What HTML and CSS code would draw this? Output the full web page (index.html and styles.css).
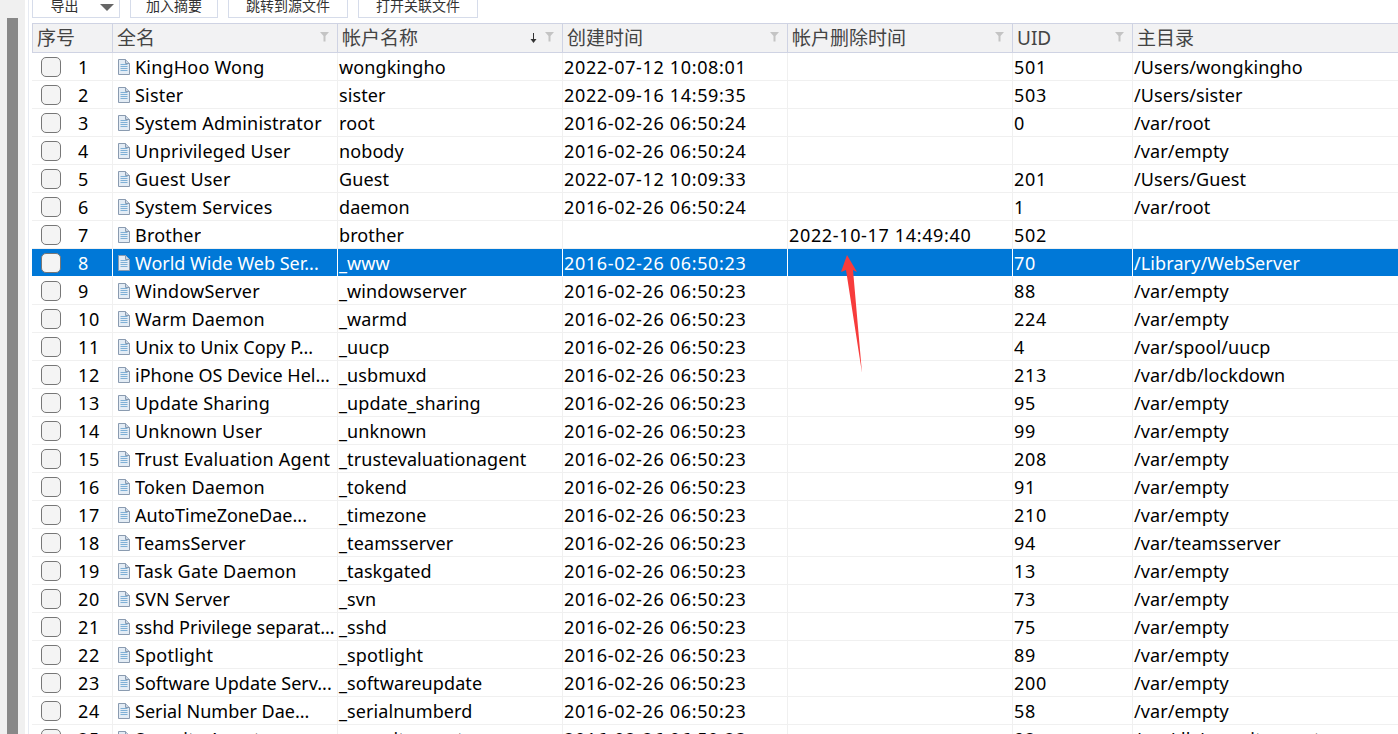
FILE: index.html
```html
<!DOCTYPE html>
<html lang="zh-CN">
<head>
  <meta charset="UTF-8">
  <title>用户账户</title>
  <link rel="stylesheet" href="styles.css">
</head>
<body>
  <div class="side"><div class="side-thumb"></div></div>
  <div class="main">
    <div class="toolbar">
      <button class="btn btn-export"><span class="btn-label">导出</span><span class="caret"></span></button>
      <button class="btn btn-add"><span class="btn-label">加入摘要</span></button>
      <button class="btn btn-jump"><span class="btn-label">跳转到源文件</span></button>
      <button class="btn btn-open"><span class="btn-label">打开关联文件</span></button>
    </div>
    <div class="table" id="table">
      <div class="row head">
        <div class="cell">序号</div>
        <div class="cell">全名<svg class="filter" width="9" height="10" viewBox="0 0 9 10"><path d="M0 0H9L5.500 4V9.500H3.500V4Z"/></svg></div>
        <div class="cell">帐户名称<svg class="sort" width="7" height="10" viewBox="0 0 7 10"><path d="M3 0H4V6H6.500L3.500 10L0.500 6H3Z"/></svg><svg class="filter" width="9" height="10" viewBox="0 0 9 10"><path d="M0 0H9L5.500 4V9.500H3.500V4Z"/></svg></div>
        <div class="cell">创建时间<svg class="filter" width="9" height="10" viewBox="0 0 9 10"><path d="M0 0H9L5.500 4V9.500H3.500V4Z"/></svg></div>
        <div class="cell">帐户删除时间<svg class="filter" width="9" height="10" viewBox="0 0 9 10"><path d="M0 0H9L5.500 4V9.500H3.500V4Z"/></svg></div>
        <div class="cell">UID<svg class="filter" width="9" height="10" viewBox="0 0 9 10"><path d="M0 0H9L5.500 4V9.500H3.500V4Z"/></svg></div>
        <div class="cell">主目录</div>
      </div>
    </div>
  </div>
  <svg class="arrow" width="40" height="130" viewBox="0 0 40 130">
    <path d="M7 0L1 17L6 15L22 118L13 15L17 17Z" fill="#f73c3c"/>
  </svg>
  <script src="rows.js"></script>
</body>
</html>
```

FILE: styles.css
```css
html, body {
  margin: 0;
  height: 100%;
  overflow: hidden;
}
body {
  display: flex;
  background: #fff;
  color: #000;
  font-family: "Noto Sans", "Noto Sans CJK SC", sans-serif;
  font-size: 18px;
  letter-spacing: .1px;
}
.side {
  width: 25px;
  flex: none;
  background: #f0f0f0;
  padding: 18px 7px 0;
  box-sizing: border-box;
  margin-right: 3px;
}
.side-thumb {
  width: 11px;
  height: 716px;
  background: #888;
}
.main {
  flex: 1;
  min-width: 0;
  border-left: 1px solid #e6eaf2;
  padding-left: 3px;
}
.toolbar {
  display: flex;
  height: 18px;
  margin-bottom: 5px;
}
.btn {
  height: 18px;
  box-sizing: border-box;
  background: #fff;
  border: 1px solid #d6dcea;
  border-top: 0;
  padding: 0;
  font: 14px "Noto Sans CJK SC", sans-serif;
  color: #333;
  overflow: hidden;
  position: relative;
}
.btn-label {
  position: absolute;
  left: 0;
  right: 0;
  top: -5px;
  line-height: 20px;
  text-align: center;
}
.btn-export { width: 88px; margin-right: 10px; }
.btn-export .btn-label { right: 23px; }
.btn-add { width: 88px; margin-right: 10px; }
.btn-jump { width: 120px; margin-right: 10px; }
.btn-open { width: 120px; }
.caret {
  position: absolute;
  right: 5px;
  top: 4px;
  border: 7px solid transparent;
  border-top: 7px solid #666;
  border-bottom: 0;
}
.table {
  border-top: 1px solid #cfd3e3;
}
.row {
  display: grid;
  grid-template-columns: 81px 225px 225px 225px 225px 120px 1fr;
  height: 28px;
  box-sizing: border-box;
  border-bottom: 1px solid #f0f0f0;
  line-height: 29px;
}
.cell {
  position: relative;
  box-sizing: border-box;
  border-right: 1px solid #f0f0f0;
  padding-left: 1px;
  white-space: nowrap;
  overflow: hidden;
}
.row .cell:last-child { border-right: 0; }
.head {
  height: 29px;
  background: #f2f2f3;
  border-bottom: 1px solid #cfd3e3;
  border-left: 1px solid #cfd3e3;
  color: #444;
  font-size: 19px;
  letter-spacing: 0;
  line-height: 28px;
  grid-template-columns: 80px 225px 225px 225px 225px 120px 1fr;
}
.head .cell {
  border-right: 1px solid #cfd3e3;
  padding-left: 4px;
}
.filter {
  position: absolute;
  right: 8px;
  top: 8px;
  fill: #c4c4c4;
}
.sort {
  position: absolute;
  right: 25px;
  top: 9px;
  fill: #333;
}
.selected {
  background: #0078d7;
  color: #fff;
  border-bottom-color: #fff;
}
.selected .cell { border-right-color: #fff; }
.num {
  display: flex;
  align-items: center;
  padding-left: 9px;
}
.check {
  width: 20px;
  height: 20px;
  box-sizing: border-box;
  border: 1px solid #777;
  border-radius: 5px;
  background: #f4f4f4;
  flex: none;
}
.num span {
  flex: 1;
  padding-left: 17px;
  padding-top: 1px;
}
.digits { letter-spacing: .65px; }
.name {
  display: flex;
  align-items: center;
  gap: 5px;
  padding-left: 4px;
  letter-spacing: .2px;
}
.name svg { flex: none; }
.name span {
  overflow: hidden;
  white-space: nowrap;
  padding-top: 1px;
}
.name .cut { letter-spacing: 0; }
.arrow {
  position: absolute;
  left: 840px;
  top: 255px;
}
```

FILE: rows.js
```js
var rows = [
  ['KingHoo Wong', 'wongkingho', '2022-07-12 10:08:01', '', '501', '/Users/wongkingho'],
  ['Sister', 'sister', '2022-09-16 14:59:35', '', '503', '/Users/sister'],
  ['System Administrator', 'root', '2016-02-26 06:50:24', '', '0', '/var/root'],
  ['Unprivileged User', 'nobody', '2016-02-26 06:50:24', '', '', '/var/empty'],
  ['Guest User', 'Guest', '2022-07-12 10:09:33', '', '201', '/Users/Guest'],
  ['System Services', 'daemon', '2016-02-26 06:50:24', '', '1', '/var/root'],
  ['Brother', 'brother', '', '2022-10-17 14:49:40', '502', ''],
  ['World Wide Web Ser...', '_www', '2016-02-26 06:50:23', '', '70', '/Library/WebServer'],
  ['WindowServer', '_windowserver', '2016-02-26 06:50:23', '', '88', '/var/empty'],
  ['Warm Daemon', '_warmd', '2016-02-26 06:50:23', '', '224', '/var/empty'],
  ['Unix to Unix Copy P...', '_uucp', '2016-02-26 06:50:23', '', '4', '/var/spool/uucp'],
  ['iPhone OS Device Hel...', '_usbmuxd', '2016-02-26 06:50:23', '', '213', '/var/db/lockdown'],
  ['Update Sharing', '_update_sharing', '2016-02-26 06:50:23', '', '95', '/var/empty'],
  ['Unknown User', '_unknown', '2016-02-26 06:50:23', '', '99', '/var/empty'],
  ['Trust Evaluation Agent', '_trustevaluationagent', '2016-02-26 06:50:23', '', '208', '/var/empty'],
  ['Token Daemon', '_tokend', '2016-02-26 06:50:23', '', '91', '/var/empty'],
  ['AutoTimeZoneDae...', '_timezone', '2016-02-26 06:50:23', '', '210', '/var/empty'],
  ['TeamsServer', '_teamsserver', '2016-02-26 06:50:23', '', '94', '/var/teamsserver'],
  ['Task Gate Daemon', '_taskgated', '2016-02-26 06:50:23', '', '13', '/var/empty'],
  ['SVN Server', '_svn', '2016-02-26 06:50:23', '', '73', '/var/empty'],
  ['sshd Privilege separat...', '_sshd', '2016-02-26 06:50:23', '', '75', '/var/empty'],
  ['Spotlight', '_spotlight', '2016-02-26 06:50:23', '', '89', '/var/empty'],
  ['Software Update Serv...', '_softwareupdate', '2016-02-26 06:50:23', '', '200', '/var/empty'],
  ['Serial Number Dae...', '_serialnumberd', '2016-02-26 06:50:23', '', '58', '/var/empty'],
  ['Security Agent', '_securityagent', '2016-02-26 06:50:23', '', '92', '/var/db/securityagent']
];

var icon = '<svg width="13" height="17" viewBox="0 0 13 17">' +
  '<path d="M1.500 1.500H8.500L12.500 5.500V16.500H1.500Z" fill="#e3ecf5" stroke="#8a9bb0"/>' +
  '<path d="M8.500 1.500V5.500H12.500" fill="#c9d6e4" stroke="#8a9bb0"/>' +
  '<path d="M3.500 6.500H10.500M3.500 8.500H10.500M3.500 10.500H10.500M3.500 12.500H10.500" stroke="#7fb0d6"/>' +
  '</svg>';

var table = document.getElementById('table');
rows.forEach(function (r, i) {
  var row = document.createElement('div');
  var cut = r[0].slice(-3) === '...' ? ' class="cut"' : '';
  row.className = i === 7 ? 'row selected' : 'row';
  row.innerHTML =
    '<div class="cell num digits"><div class="check"></div><span>' + (i + 1) + '</span></div>' +
    '<div class="cell name">' + icon + '<span' + cut + '>' + r[0] + '</span></div>' +
    '<div class="cell">' + r[1] + '</div>' +
    '<div class="cell digits">' + r[2] + '</div>' +
    '<div class="cell digits">' + r[3] + '</div>' +
    '<div class="cell digits">' + r[4] + '</div>' +
    '<div class="cell">' + r[5] + '</div>';
  table.appendChild(row);
});
```
